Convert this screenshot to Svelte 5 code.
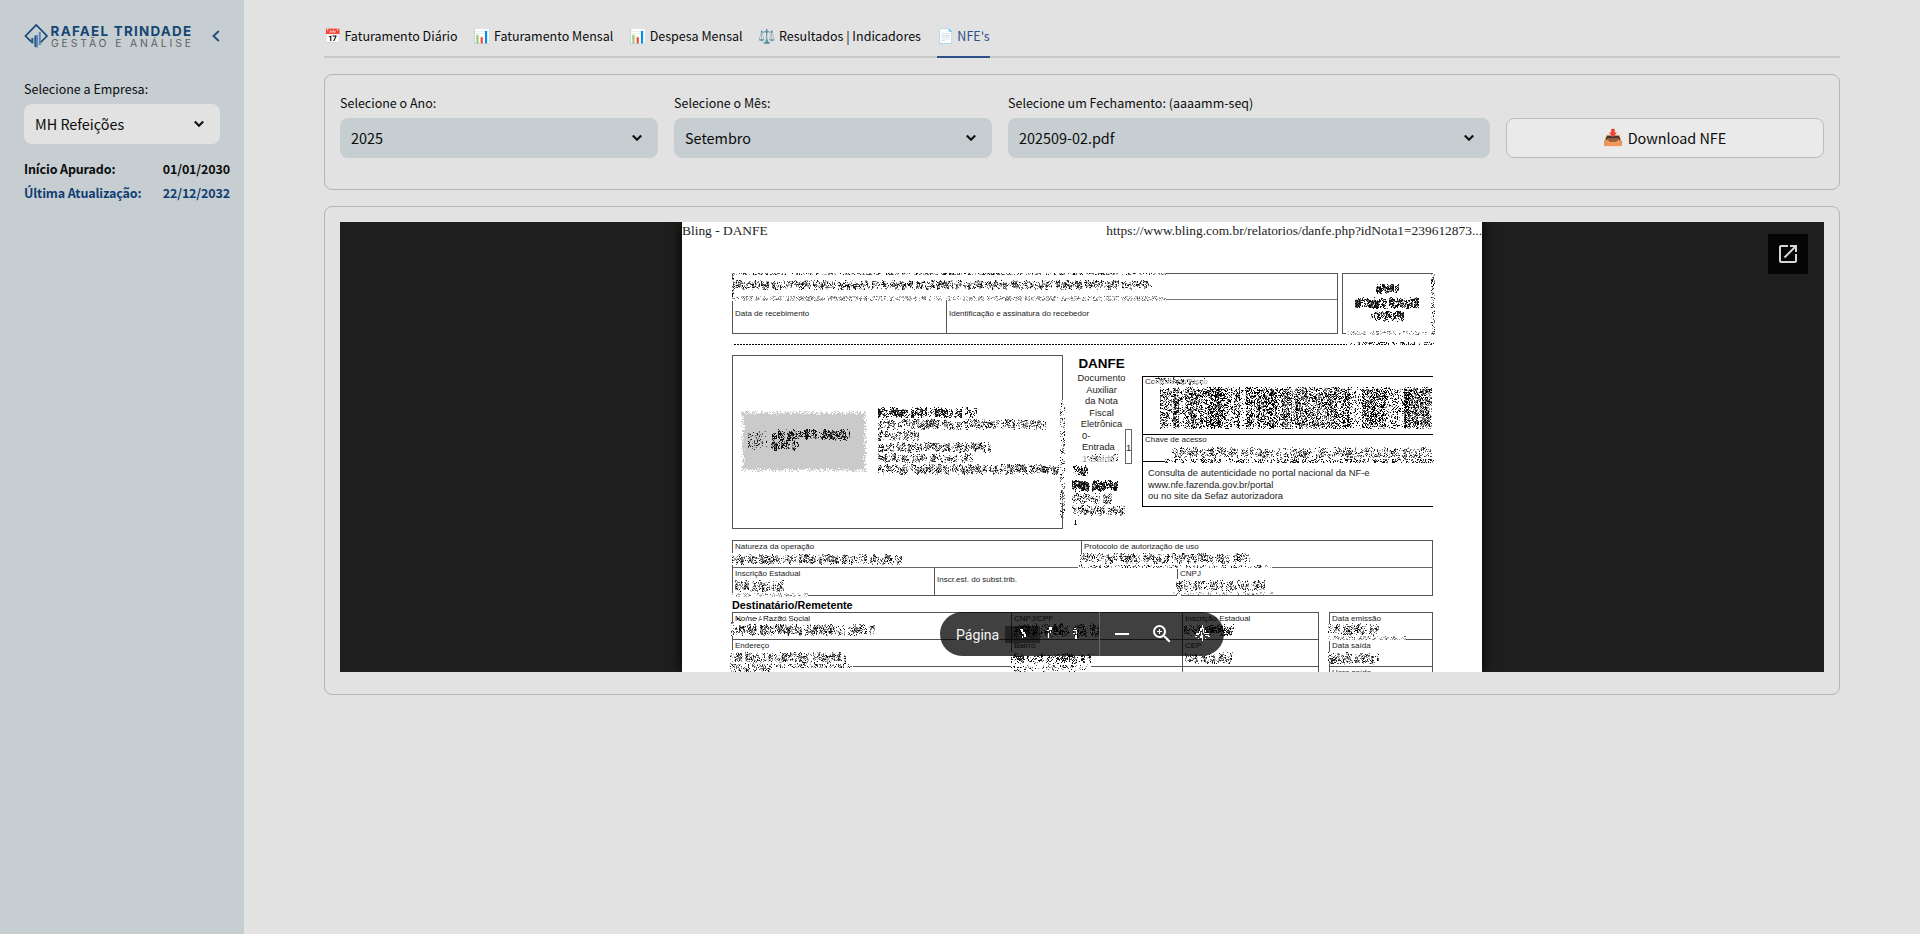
<script>
  const tabs = [
    { icon: '📅', label: 'Faturamento Diário' },
    { icon: '📊', label: 'Faturamento Mensal' },
    { icon: '📊', label: 'Despesa Mensal' },
    { icon: '⚖️', label: 'Resultados | Indicadores' },
    { icon: '📄', label: "NFE's", active: true }
  ];
  const filters = [
    { label: 'Selecione o Ano:', value: '2025' },
    { label: 'Selecione o Mês:', value: 'Setembro' },
    { label: 'Selecione um Fechamento: (aaaamm-seq)', value: '202509-02.pdf' }
  ];

  // Seeded generator, so that the scrambled fields are stable between renders.
  function random(seed) {
    let s = seed;
    return () => {
      s = (s * 1664525 + 1013904223) >>> 0;
      return s / 4294967296;
    };
  }

  // Each field: x, y, width, height, density, tone (0 light, 1 normal, 2 dark), words
  function speckle(fields, seed) {
    const rnd = random(seed);
    const out = ['', '', ''];
    for (const [x, y, w, h, density, tone, words = true] of fields) {
      let gap = 0;
      let run = 12 + rnd() * 26;
      let weight = 1;
      let drift = 0;
      for (let i = 0; i < w; i++) {
        if (words) {
          if (gap > 0) gap--;
          else if (--run <= 0) {
            gap = 3;
            run = 12 + rnd() * 30;
          }
          if (i % 3 === 0) {
            weight = 0.5 + rnd() * 0.75;
            drift = (rnd() - 0.5) * 3.4;
          }
        }
        const columnWeight = words ? (gap > 0 ? 0.15 : weight) : 1;
        for (let j = 0; j < h; j++) {
          const edge = words && h > 5 ? Math.max(0.06, Math.min(1, 2.3 * (1 - Math.abs((j + 0.5 + drift) / h - 0.5) * 2.1))) : 1;
          if (rnd() < density * columnWeight * edge) {
            const r = rnd();
            const level = tone === 2 ? (r < 0.68 ? 0 : r < 0.92 ? 1 : 2) : tone === 1 ? (r < 0.28 ? 0 : r < 0.68 ? 1 : 2) : r < 0.25 ? 1 : 2;
            out[level] += `M${x + i} ${y + j}h1v1h-1z`;
          }
        }
      }
    }
    return out;
  }

  const fields = [
    [732, 273, 434, 2, 0.55, 1], [733, 280, 419, 10, 0.68, 1], [732, 296, 434, 5, 0.48, 0],
    [732, 275, 2, 24, 0.5, 1, false],
    [1376, 284, 23, 10, 0.8, 2], [1355, 297, 64, 12, 0.8, 2], [1371, 311, 33, 11, 0.7, 2],
    [1431, 274, 4, 60, 0.36, 1, false], [1348, 331, 86, 4, 0.4, 0], [1346, 342, 88, 3, 0.45, 2],
    [748, 430, 19, 21, 0.5, 1], [772, 429, 78, 12, 0.8, 2], [771, 440, 28, 11, 0.8, 2],
    [878, 407, 99, 11, 0.78, 2], [878, 419, 168, 11, 0.62, 1], [878, 430, 41, 11, 0.64, 1],
    [878, 442, 113, 11, 0.64, 1], [878, 453, 95, 10, 0.64, 1], [878, 464, 181, 11, 0.72, 1],
    [1060, 400, 5, 118, 0.26, 1, false],
    [1083, 454, 35, 8, 0.35, 1], [1073, 465, 15, 11, 0.75, 2], [1072, 480, 46, 12, 0.85, 2],
    [1072, 493, 40, 11, 0.55, 1], [1072, 505, 53, 11, 0.62, 1], [1074, 520, 3, 5, 0.6, 1, false],
    [1155, 377, 53, 8, 0.45, 1], [1172, 447, 260, 12, 0.56, 1], [1165, 459, 269, 4, 0.42, 2],
    [732, 554, 170, 11, 0.66, 1], [1080, 553, 170, 11, 0.6, 1], [1079, 565, 192, 3, 0.35, 1],
    [735, 580, 49, 12, 0.66, 1], [732, 593, 76, 4, 0.35, 0], [1176, 580, 89, 12, 0.62, 1], [1173, 592, 101, 3, 0.25, 0],
    [735, 616, 62, 6, 0.1, 2], [733, 624, 142, 12, 0.68, 1], [731, 622, 3, 14, 0.35, 1, false],
    [730, 652, 116, 12, 0.62, 1], [730, 664, 123, 4, 0.42, 1], [730, 668, 42, 4, 0.5, 1],
    [1014, 623, 85, 15, 0.6, 2], [1011, 653, 80, 11, 0.5, 2], [1011, 664, 77, 8, 0.35, 1],
    [1184, 624, 50, 12, 0.65, 2], [1185, 652, 48, 12, 0.6, 1],
    [1328, 623, 51, 13, 0.6, 1], [1328, 636, 78, 4, 0.4, 0], [1328, 652, 51, 13, 0.6, 1]
  ];
  const ink = speckle(fields, 41);

  function barcode() {
    const rnd = random(97);
    const out = ['', '', ''];
    const bands = [.55,.4,.8,.3,.55,.65,.6,.45,.7,.8,.55,.3,.6,.25,.72,.5,.65,.55,.7,.4,.75,.5,.8,.65,.55,.6,.55,.6,.65,.5,.7,.3,.18,.7,.6,.72,.65,.3,.35,.2,.85,.7,.65,.75,.6];
    for (let i = 0; i < 272; i++) {
      const stripe = 0.72 + rnd() * 0.36;
      const b = bands[Math.floor(i / 6.1)] * stripe;
      const grey = i < 42 || (i > 122 && i < 178) || i > 250 ? 0.5 : 0.25;
      for (let j = 0; j < 42; j++) {
        const edge = j < 2 || j > 39 ? 0.5 : 1;
        if (rnd() < b * edge) out[rnd() < grey ? 1 : rnd() < 0.12 ? 2 : 0] += `M${1160 + i} ${387 + j}h1v1h-1z`;
      }
    }
    return out;
  }
  const bars = barcode();

  function fringe() {
    const rnd = random(12);
    let d = '';
    for (let x = 741; x < 867; x++) for (let y = 411; y < 472; y++) {
      const dist = Math.min(x - 741, 866 - x, y - 411, 471 - y);
      if (dist < 4 && rnd() < 0.25 + dist * 0.2) d += `M${x} ${y}h1v1h-1z`;
    }
    return d;
  }
  const stampEdge = fringe();
  const glow = 'M1020 629h3v1h-3zM1021 630h2v2h-2zM1022 632h3v2h-3zM1024 634h2v3h-2zM1022 636h1v2h-1zM1049 627h3v3h-3zM1047 630h2v1h-2zM1050 631h1v2h-1zM1048 633h1v5h-1zM1074 628h2v1h-2zM1073 630h4v1h-4zM1076 631h1v3h-1zM1073 633h2v1h-2zM1075 635h2v4h-2zM1202 625h1v4h-1zM1200 628h2v3h-2zM1203 628h1v5h-1zM1201 632h1v4h-1zM1196 633h3v2h-3zM1195 636h2v1h-2zM1199 631h1v3h-1zM1204 633h5v1h-5zM1205 635h4v1h-4zM1200 636h2v2h-2zM1202 635h1v6h-1zM1205 630h1v2h-1zM1208 636h2v1h-2zM1198 638h1v1h-1zM1205 638h1v1h-1z';
</script>

{#snippet chevron()}
  <svg class="chev" viewBox="0 0 12 10" width="12" height="10"><path d="M1.8 2.5 6 6.8l4.2-4.3" fill="none" stroke="#111" stroke-width="2.1" /></svg>
{/snippet}

<div class="app">
  <aside>
    <div class="brand">
      <svg width="168" height="28" viewBox="0 0 168 28">
        <path d="M7.5 19.8 1.5 14 12.2 3 23 14l-6.5 6.5" fill="none" stroke="#164674" stroke-width="1.7" />
        <path d="M8.3 16v5.5M11.4 13.5V25" stroke="#245584" stroke-width="2" />
        <path d="M13 13v12.5M15.8 10v13" stroke="#5b83b5" stroke-width="1.9" />
        <text x="26.6" y="14" class="name" textLength="140.5">RAFAEL TRINDADE</text>
        <text x="27" y="25" class="tag" textLength="140">GESTÃO E ANÁLISE</text>
      </svg>
      <svg class="collapse" width="10" height="14" viewBox="0 0 10 14"><path d="M7.8 2 2.5 7l5.3 5" fill="none" stroke="#28517f" stroke-width="2" /></svg>
    </div>
    <div class="label">Selecione a Empresa:</div>
    <div class="select company"><span>MH Refeições</span>{@render chevron()}</div>
    <div class="date"><span>Início Apurado:</span><span>01/01/2030</span></div>
    <div class="date blue"><span>Última Atualização:</span><span>22/12/2032</span></div>
  </aside>

  <main>
    <nav>
      {#each tabs as tab}
        <div class="tab" class:active={tab.active}><span class="emoji">{tab.icon}</span><span>{tab.label}</span></div>
      {/each}
    </nav>

    <section class="card filters">
      {#each filters as f}
        <div>
          <div class="label">{f.label}</div>
          <div class="select"><span>{f.value}</span>{@render chevron()}</div>
        </div>
      {/each}
      <button><span class="emoji">📥</span><span>Download NFE</span></button>
    </section>

    <section class="card">
      <div class="viewer">
        <div class="page">
          <header><span>Bling - DANFE</span><span>https://www.bling.com.br/relatorios/danfe.php?idNota1=239612873...</span></header>

          <div class="receipt">
            <div class="box stub">
              <div class="line top"></div>
              <div class="cell date-cell">Data de recebimento</div>
              <div class="cell">Identificação e assinatura do recebedor</div>
            </div>
            <div class="box number"></div>
          </div>
          <div class="cut"></div>

          <div class="issuer">
            <div class="box company-box"></div>
            <div class="danfe">
              <h2>DANFE</h2>
              <p>Documento<br />Auxiliar<br />da Nota<br />Fiscal<br />Eletrônica</p>
              <div class="kind"><p>0-<br />Entrada<br />1-Saída</p><div class="one">1</div></div>
            </div>
            <div class="control">
              <div class="c1">Controle do Fisco</div>
              <div class="c2">Chave de acesso</div>
              <div class="c3">Consulta de autenticidade no portal nacional da NF-e<br />www.nfe.fazenda.gov.br/portal<br />ou no site da Sefaz autorizadora</div>
            </div>
          </div>

          <div class="nature box">
            <div class="row r1"><div class="cell">Natureza da operação</div><div class="cell">Protocolo de autorização de uso</div></div>
            <div class="row r2"><div class="cell">Inscrição Estadual</div><div class="cell mid">Inscr.est. do subst.trib.</div><div class="cell">CNPJ</div></div>
          </div>

          <h3>Destinatário/Remetente</h3>
          <div class="recipient">
            <div class="table">
              <div class="cell">Nome / Razão Social</div><div class="cell">CNPJ/CPF</div><div class="cell">Inscrição Estadual</div>
              <div class="cell">Endereço</div><div class="cell">Bairro</div><div class="cell">CEP</div>
              <div class="cell"></div><div class="cell"></div><div class="cell"></div>
            </div>
            <div class="table dates"><div class="cell">Data emissão</div><div class="cell">Data saída</div><div class="cell">Hora saída</div></div>
          </div>

          <svg class="ink" viewBox="682 222 800 450" width="800" height="450" shape-rendering="crispEdges">
            <path fill="#fff" d="M732 272h434v4h-434zM732 276h2v24h-2zM732 296h434v5h-434zM1431 274h4v60h-4zM1346 331h88v4h-88zM1346 342h88v4h-88zM1061 400h4v90h-4zM1165 459h270v4h-270zM1078 565h194v4h-194zM1080 554h4v10h-4zM732 553h3v12h-3zM732 593h76v4h-76zM1177 579h4v17h-4zM731 622h4v14h-4zM731 650h4v22h-4zM732 664h121v5h-121zM1011 652h2v20h-2zM1011 664h80v5h-80zM1328 624h3v16h-3zM1328 636h78v5h-78zM1328 652h3v12h-3z" />
            <path fill="#fff" opacity=".6" d="M1154 378h54v8h-54zM1083 453h35v9h-35z" />
            <rect x="745" y="415" width="118" height="53" fill="#cacaca" />
            <path d={stampEdge} fill="#cacaca" />
            <path d={ink[2]} fill="#a9a9a9" /><path d={ink[1]} fill="#606060" /><path d={ink[0]} fill="#111" />
            <path d={bars[2]} fill="#b5b5b5" /><path d={bars[1]} fill="#707070" /><path d={bars[0]} fill="#000" />
          </svg>
        </div>

        <div class="open">
          <svg width="24" height="24" viewBox="0 0 24 24"><path fill="#d6d6d6" d="M19 19H5V5h7V3H5a2 2 0 0 0-2 2v14a2 2 0 0 0 2 2h14c1.1 0 2-.9 2-2v-7h-2v7zM14 3v2h3.59l-9.83 9.83 1.41 1.41L19 6.41V10h2V3h-7z" /></svg>
        </div>
        <div class="toolbar">
          <span class="word">Página</span><span class="field"></span><span class="rule"></span>
          <svg class="minus" width="14" height="2"><rect width="14" height="2" fill="#fff" /></svg>
          <svg class="zoom" width="24" height="24" viewBox="0 0 24 24"><path fill="#fff" d="M15.5 14h-.79l-.28-.27A6.47 6.47 0 0 0 16 9.5 6.5 6.5 0 1 0 9.5 16c1.61 0 3.09-.59 4.23-1.57l.27.28v.79l5 4.99L20.49 19l-4.99-5zm-6 0A4.5 4.5 0 1 1 9.5 5a4.5 4.5 0 0 1 0 9zM10 7H9v2H7v1h2v2h1v-2h2V9h-2z" /></svg>
          <svg class="glow" viewBox="940 612 284 44" width="284" height="44" shape-rendering="crispEdges"><path d={glow} fill="#fff" /></svg>
        </div>
      </div>
    </section>
  </main>
</div>

<style>
  :global(body) { background: #e2e2e2; }
  .app, .app * { box-sizing: border-box; }
  .app { display: flex; height: 934px; overflow: hidden; background: #e2e2e2; color: #0c0c0c; font: 12.5px/20px "Source Sans Pro", "Noto Sans CJK SC", sans-serif; }
  aside { width: 244px; padding: 22px 14px 0 24px; background: #c6ced1; flex: none; }
  .brand { display: flex; height: 57px; }
  .collapse { margin: 7px 0 0 19px; }
  .name { font: 700 13.4px Inter, sans-serif; fill: #164674; }
  .tag { font: 400 10.4px Inter, sans-serif; fill: #5b6266; }
  .label { height: 25px; white-space: nowrap; }
  .select { display: flex; align-items: center; justify-content: space-between; height: 40px; border-radius: 8px; background: #c6ced1; padding: 0 15px 0 11px; font-size: 14.4px; }
  .company { width: 196px; background: #e2e2e2; margin-bottom: 15px; }
  .chev { flex: none; }
  .date { display: flex; justify-content: space-between; width: 206px; height: 24px; letter-spacing: -.14px; font-weight: 600; white-space: nowrap; }
  .blue { color: #103d72; }
  main { width: 1516px; margin-left: 80px; padding-top: 16px; }
  nav { display: flex; gap: 16px; height: 42px; border-bottom: 2px solid #c9c9c9; }
  .tab { display: flex; gap: 3px; height: 42px; padding-top: 10px; white-space: nowrap; }
  .active { color: #2f5087; border-bottom: 2px solid #2f5087; }
  .emoji { font-family: "Noto Color Emoji", sans-serif; font-size: 14px; }
  .card { border: 1px solid #b5b5b5; border-radius: 8px; padding: 15px; margin-top: 16px; }
  .filters { display: grid; grid-template-columns: 318px 318px 482px 318px; gap: 16px; height: 116px; padding-top: 18px; }
  button { display: flex; align-items: center; justify-content: center; gap: 4px; height: 40px; margin-top: 25px; border: 1px solid #bcbcbc; border-radius: 8px; background: #eaeaea; color: inherit; font: inherit; font-size: 14.4px; }
  button .emoji { font-size: 16px; }
  .card + .card { height: 489px; }
  .viewer { position: relative; display: flex; justify-content: center; height: 450px; overflow: hidden; background: #1e1e1e; }
  .page { position: relative; width: 800px; height: 450px; overflow: hidden; background: #fff; box-shadow: 0 0 12px #000; color: #222; font: 8px/10px "Liberation Sans", sans-serif; }
  .page header { display: flex; justify-content: space-between; height: 51px; font: 13.42px/17px "Liberation Serif", serif; }
  .ink { position: absolute; inset: 0; }
  .box { border: 1px solid #555; }
  .receipt { display: flex; gap: 4px; margin-left: 50px; }
  .stub { width: 606px; height: 61px; display: grid; grid-template-columns: 214px 1fr; grid-template-rows: 25px 1fr; }
  .line { grid-column: 1 / 3; }
  .stub .cell { border-top: 1px solid #777; padding: 9px 2px; }
  .date-cell { border-right: 1px solid #777; }
  .number { width: 91px; height: 61px; }
  .cut { height: 1px; margin: 10px 0 10px 52px; width: 699px; background: repeating-linear-gradient(90deg, #000 0 2px, transparent 2px 3px); }
  .issuer { display: flex; margin-left: 50px; height: 185px; }
  .company-box { width: 331px; height: 174px; }
  .danfe { width: 79px; padding-right: 2px; text-align: center; font-size: 9.4px; line-height: 11.5px; }
  .danfe h2 { margin: 2px 0 1px; font-size: 13.4px; line-height: 14px; color: #000; }
  .danfe p { margin: 0; }
  .kind { display: flex; justify-content: space-between; padding: 0 8px 0 19px; text-align: left; }
  .one { width: 7px; height: 35px; border: 1px solid #666; line-height: 35px; margin-top: -1px; }
  .control { width: 291px; height: 131px; margin-top: 21px; border: solid #000; border-width: 1px 0 1px 1px; }
  .c1 { height: 57px; padding: 0 2px; }
  .c2 { height: 28px; border: solid #000; border-width: 1px 0; padding: 0 2px; }
  .c3 { padding: 6px 5px; font-size: 9.38px; line-height: 11.5px; }
  .nature { width: 701px; height: 56px; margin: 0 0 0 50px; }
  .row { display: grid; height: 27px; }
  .cell { padding: 1px 2px; border-color: #555; }
  .r1 { grid-template-columns: 348px 1fr; border-bottom: 1px solid #666; }
  .r2 { grid-template-columns: 201px 243px 1fr; }
  .row .cell + .cell { border-left: 1px solid #555; }
  .row .mid { padding-top: 7px; }
  h3 { margin: 3px 0 1px 50px; font-size: 10.8px; line-height: 12px; color: #000; }
  .recipient { display: flex; gap: 10px; margin-left: 50px; }
  .table { display: grid; width: 587px; grid-template-columns: 279px 171px 1fr; grid-auto-rows: 27px; border-right: 1px solid #555; }
  .table .cell { border: solid #555; border-width: 1px 0 0 1px; }
  .dates { width: 104px; grid-template-columns: 1fr; }
  .open { position: absolute; top: 12px; right: 16px; width: 40px; height: 40px; padding: 8px; background: #050505; }
  .toolbar { position: absolute; left: 600px; top: 390px; width: 284px; height: 44px; display: flex; align-items: center; padding-left: 16px; border-radius: 22px; background: rgba(0, 0, 0, .75); color: #f5f5f5; font: 14.1px/20px Roboto, sans-serif; }
  .word { width: 49px; margin-top: 1px; }
  .field { width: 35px; height: 17px; background: rgba(0, 0, 0, .45); }
  .rule { width: 1px; height: 44px; margin-left: 59px; background: #686868; }
  .minus { margin-left: 15px; }
  .zoom { margin-left: 21px; }
  .glow { position: absolute; inset: 0; }
</style>
